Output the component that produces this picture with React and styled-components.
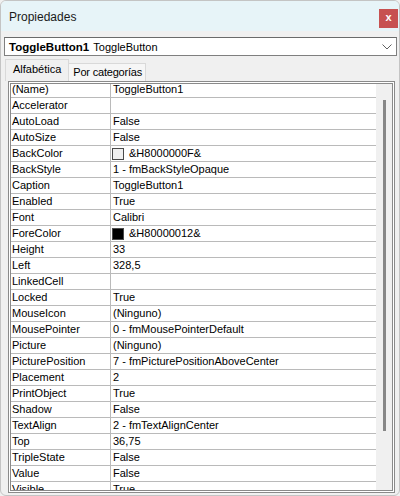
import React from 'react'
import styled, { createGlobalStyle } from 'styled-components'

const GlobalStyle = createGlobalStyle`
    html, body {
        margin: 0;
        padding: 0;
        background: #f0f0f0;
    }
    * {
        box-sizing: border-box;
    }
`

const Window = styled.div`
    width: 400px;
    height: 496px;
    display: flex;
    flex-direction: column;
    background: #f0f0f0;
    border: 1px solid #c4c4c4;
    border-radius: 6px;
    overflow: hidden;
    font-family: "Liberation Sans", Arial, sans-serif;
    font-size: 11px;
    color: #000;
`

const TitleBar = styled.div`
    height: 30px;
    flex-shrink: 0;
    display: flex;
    align-items: center;
    justify-content: space-between;
    background: #e7f4f8;
    padding-left: 8px;
    padding-right: 1px;
`

const Title = styled.div`
    font-size: 12px;
    color: #1a1a1a;
    margin-top: 1px;
`

const CloseButton = styled.div`
    width: 19px;
    height: 19px;
    margin-top: 4px;
    background: #c75151;
    color: #fff;
    font-weight: bold;
    font-size: 11px;
    line-height: 16px;
    text-align: center;
`

const Combo = styled.div`
    margin: 6px 0 0 3px;
    width: 393px;
    height: 19px;
    border: 1px solid #7f7f7f;
    border-top-color: #6a6a6a;
    background: #fff;
    display: flex;
    align-items: center;
    padding-left: 4px;
    padding-right: 4px;
    gap: 4px;
`

const ComboBold = styled.span`
    font-weight: bold;
    font-size: 11.5px;
`

const ComboText = styled.span`
    flex: 1;
`

const TabRow = styled.div`
    margin: 3px 0 0 4px;
    display: flex;
    align-items: flex-end;
    height: 22px;
`

const Tab = styled.div`
    height: ${p => (p.active ? '22px' : '18px')};
    padding: ${p => (p.active ? '3px 7px 0 7px' : '2px 3px 0 4px')};
    background: ${p => (p.active ? '#f0f0f0' : '#f6f6f6')};
    border: 1px solid #d9d9d9;
    border-bottom: none;
    border-left: ${p => (p.active ? '1px solid #d9d9d9' : 'none')};
    line-height: 12px;
    letter-spacing: ${p => (p.active ? '0' : '-0.2px')};
`

const Frame = styled.div`
    margin-left: 7px;
    width: 387px;
    height: 412px;
    border: 3px double #8a8a8a;
    display: flex;
    overflow: hidden;
    background: #fff;
`

const Rows = styled.div`
    flex: 1;
    display: flex;
    flex-direction: column;
    overflow: hidden;
`

const Row = styled.div`
    display: flex;
    flex-shrink: 0;
    height: 16px;
    border-bottom: 1px solid #bababa;
    &:first-child {
        margin-top: -2px;
    }
`

const NameCell = styled.div`
    width: 100px;
    border-right: 1px solid #bababa;
    padding-left: 1px;
    line-height: 15px;
    white-space: nowrap;
    overflow: hidden;
`

const ValueCell = styled.div`
    flex: 1;
    display: flex;
    align-items: center;
    padding-left: 2px;
    line-height: 15px;
    white-space: nowrap;
    overflow: hidden;
`

const Swatch = styled.span`
    width: 12px;
    height: 12px;
    margin-left: -1px;
    margin-right: 5px;
    border: 1px solid #4a4a4a;
    background: ${p => p.color};
`

const ScrollTrack = styled.div`
    width: 16px;
    flex-shrink: 0;
    background: #f0f0f0;
    display: flex;
    justify-content: center;
    padding-top: 16px;
`

const Thumb = styled.div`
    width: 3px;
    height: 331px;
    background: #878787;
`

const Chevron = () => (
    <svg width="10" height="6" viewBox="0 0 10 6">
        <path d="M0.5 0.5 L5 5 L9.5 0.5" fill="none" stroke="#606060" strokeWidth="1" />
    </svg>
)

const props = [
    { name: '(Name)', value: 'ToggleButton1' },
    { name: 'Accelerator', value: '' },
    { name: 'AutoLoad', value: 'False' },
    { name: 'AutoSize', value: 'False' },
    { name: 'BackColor', value: '&H8000000F&', color: '#f0f0f0' },
    { name: 'BackStyle', value: '1 - fmBackStyleOpaque' },
    { name: 'Caption', value: 'ToggleButton1' },
    { name: 'Enabled', value: 'True' },
    { name: 'Font', value: 'Calibri' },
    { name: 'ForeColor', value: '&H80000012&', color: '#000' },
    { name: 'Height', value: '33' },
    { name: 'Left', value: '328,5' },
    { name: 'LinkedCell', value: '' },
    { name: 'Locked', value: 'True' },
    { name: 'MouseIcon', value: '(Ninguno)' },
    { name: 'MousePointer', value: '0 - fmMousePointerDefault' },
    { name: 'Picture', value: '(Ninguno)' },
    { name: 'PicturePosition', value: '7 - fmPicturePositionAboveCenter' },
    { name: 'Placement', value: '2' },
    { name: 'PrintObject', value: 'True' },
    { name: 'Shadow', value: 'False' },
    { name: 'TextAlign', value: '2 - fmTextAlignCenter' },
    { name: 'Top', value: '36,75' },
    { name: 'TripleState', value: 'False' },
    { name: 'Value', value: 'False' },
    { name: 'Visible', value: 'True' },
]

const App = () => {
    return (
        <>
            <GlobalStyle />
            <Window>
                <TitleBar>
                    <Title>Propiedades</Title>
                    <CloseButton>x</CloseButton>
                </TitleBar>
                <Combo>
                    <ComboBold>ToggleButton1</ComboBold>
                    <ComboText>ToggleButton</ComboText>
                    <Chevron />
                </Combo>
                <TabRow>
                    <Tab active>Alfabética</Tab>
                    <Tab>Por categorías</Tab>
                </TabRow>
                <Frame>
                    <Rows>
                        {props.map((p, index) => (
                            <Row key={'prop-' + index}>
                                <NameCell>{p.name}</NameCell>
                                <ValueCell>
                                    {p.color && <Swatch color={p.color} />}
                                    {p.value}
                                </ValueCell>
                            </Row>
                        ))}
                    </Rows>
                    <ScrollTrack>
                        <Thumb />
                    </ScrollTrack>
                </Frame>
            </Window>
        </>
    )
}

export default App
